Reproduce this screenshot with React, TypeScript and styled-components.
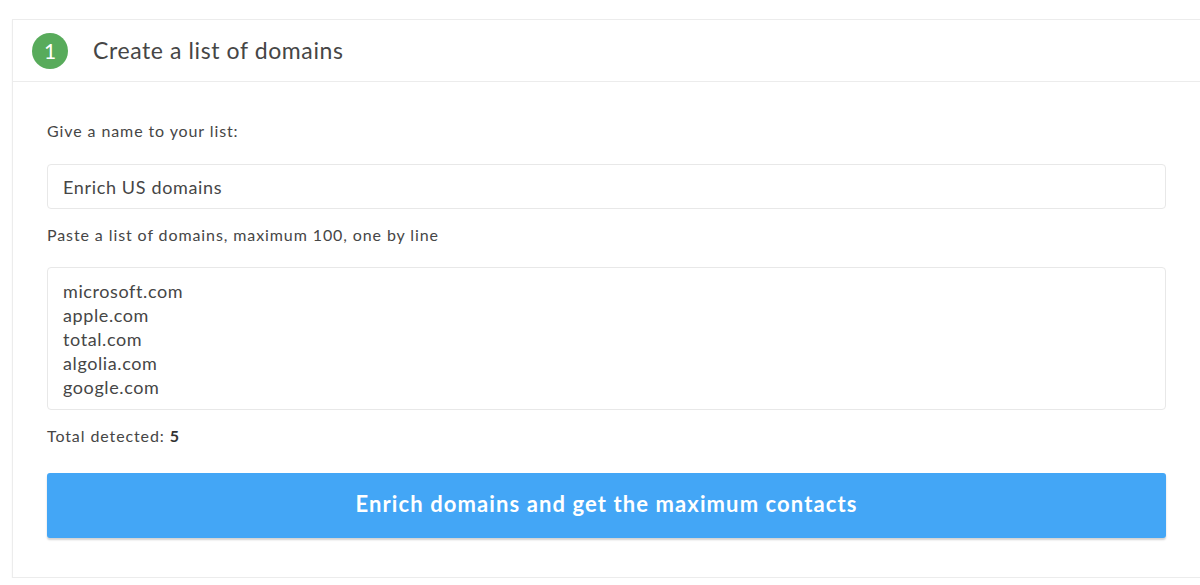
import styled, { createGlobalStyle } from 'styled-components';

const GlobalStyle = createGlobalStyle`
  html, body {
    margin: 0;
    padding: 0;
    background: #ffffff;
    overflow: hidden;
  }

  body {
    font-family: Lato, 'Open Sans', sans-serif;
    color: #464646;
  }
`;

const Page = styled.div`
  padding: 19px 0 0 12px;
  width: 1200px;
`;

const Card = styled.section`
  width: 1190px;
  border: 1px solid #ececec;
  border-right: none;
  background: #fff;
  box-shadow: 0 1px 2px rgba(0, 0, 0, 0.04);
`;

const Header = styled.header`
  height: 61px;
  display: flex;
  align-items: center;
  gap: 25px;
  padding-left: 19px;
  border-bottom: 1px solid #ececec;
`;

const StepBadge = styled.span`
  width: 36px;
  height: 36px;
  border-radius: 50%;
  background: #58ab5b;
  color: #fff;
  font-size: 21px;
  font-weight: 400;
  display: flex;
  align-items: center;
  justify-content: center;
`;

const Title = styled.h2`
  margin: 0 0 2px;
  font-size: 23px;
  font-weight: 400;
  letter-spacing: 0.6px;
  color: #464646;
`;

const Body = styled.div`
  display: flex;
  flex-direction: column;
  padding: 39px 37px 39px 34px;
`;

const Label = styled.label<{ $gap: number }>`
  font-size: 16px;
  line-height: 20px;
  letter-spacing: 0.9px;
  color: #464646;
  margin-bottom: ${(p) => p.$gap}px;
`;

const TextInput = styled.div`
  box-sizing: border-box;
  height: 45px;
  border: 1px solid #e8e8e8;
  border-radius: 4px;
  padding: 0 15px;
  display: flex;
  align-items: center;
  font-size: 18px;
  letter-spacing: 0.65px;
  color: #464646;
  margin-bottom: 16px;
`;

const TextArea = styled.div`
  box-sizing: border-box;
  height: 143px;
  border: 1px solid #e8e8e8;
  border-radius: 4px;
  padding: 11px 15px 0;
  font-size: 18px;
  line-height: 24px;
  letter-spacing: 0.6px;
  color: #464646;
  margin-bottom: 16px;
`;

const Counter = styled.div`
  font-size: 16px;
  line-height: 20px;
  letter-spacing: 0.9px;
  color: #464646;
  margin-bottom: 27px;

  b {
    font-weight: 700;
    color: #333;
  }
`;

const SubmitButton = styled.button`
  height: 65px;
  border: none;
  border-radius: 3px;
  padding: 0 0 4px;
  background: #43a6f6;
  color: #fff;
  font-family: inherit;
  font-size: 22px;
  font-weight: 700;
  letter-spacing: 1.1px;
  box-shadow: 0 2px 2px rgba(0, 0, 0, 0.18);
  cursor: pointer;
`;

const domains = ['microsoft.com', 'apple.com', 'total.com', 'algolia.com', 'google.com'];

export default function App() {
  return (
    <>
      <GlobalStyle />
      <Page>
        <Card>
          <Header>
            <StepBadge>1</StepBadge>
            <Title>Create a list of domains</Title>
          </Header>
          <Body>
            <Label $gap={23}>Give a name to your list:</Label>
            <TextInput>Enrich US domains</TextInput>
            <Label $gap={22}>Paste a list of domains, maximum 100, one by line</Label>
            <TextArea>
              {domains.map((d) => (
                <div key={d}>{d}</div>
              ))}
            </TextArea>
            <Counter>
              Total detected: <b>{domains.length}</b>
            </Counter>
            <SubmitButton>Enrich domains and get the maximum contacts</SubmitButton>
          </Body>
        </Card>
      </Page>
    </>
  );
}
